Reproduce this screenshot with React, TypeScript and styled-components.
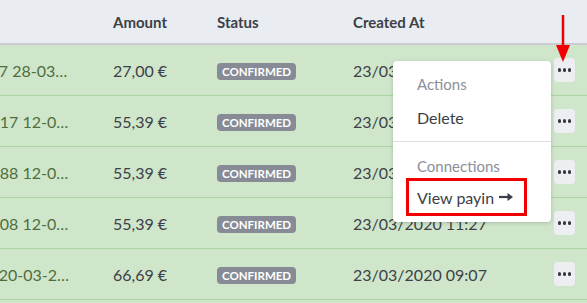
import { ReactElement } from 'react'
import styled, { createGlobalStyle } from 'styled-components'

const GlobalStyle = createGlobalStyle`
  html, body {
    margin: 0;
    padding: 0;
    background: #cfe6cb;
    font-family: Lato, "Open Sans", sans-serif;
    overflow: hidden;
  }
`

const Page = styled.div`
  position: relative;
  width: 587px;
  height: 303px;
  overflow: hidden;
`

// the table is scrolled sideways, so its first column is partly out of view
const Table = styled.div`
  margin-left: -82px;
  width: 669px;
`

const cols = '195px 104px 136px 201px 33px'

const HeaderRow = styled.div`
  display: grid;
  grid-template-columns: ${cols};
  align-items: center;
  height: 43px;
  background: #e9ecf0;
  border-bottom: 2px solid #c9ccd2;
  color: #3b3f47;
  font-weight: 700;
  font-size: 15px;
`

const Row = styled.div`
  display: grid;
  grid-template-columns: ${cols};
  align-items: center;
  height: 50px;
  background: #cfe6cb;
  border-bottom: 1px solid #a8d69f;
  color: #3d4147;
  font-size: 16px;
`

const Cell = styled.div`
  white-space: nowrap;
  overflow: hidden;
`

const LeadCell = styled(Cell)`
  padding-right: 41px;
  color: #4f6e3c;
  text-overflow: ellipsis;
`

const Badge = styled.span`
  display: inline-block;
  background: #868b95;
  color: #fff;
  font-size: 11.5px;
  font-weight: 700;
  line-height: 13px;
  padding: 2px 5px;
  border-radius: 4px;
`

const ActionCell = styled.div`
  display: flex;
`

const DotsButton = styled.div`
  width: 21px;
  height: 24px;
  border-radius: 4px;
  background: #eceef1;
  display: flex;
  align-items: center;
  justify-content: center;
  gap: 1.5px;
`

const Dot = styled.span`
  width: 3.5px;
  height: 3.5px;
  border-radius: 50%;
  background: #33373e;
`

const Menu = styled.div`
  position: absolute;
  left: 393px;
  top: 61px;
  width: 158px;
  background: #fff;
  border-radius: 4px;
  box-shadow: 0 1px 4px rgba(0, 0, 0, 0.18);
  padding: 12px 0 6px;
`

const MenuLabel = styled.div`
  padding-left: 24px;
  font-size: 15px;
  color: #8b9099;
  height: 22px;
  line-height: 22px;
`

const MenuItem = styled.div`
  padding-left: 24px;
  font-size: 16px;
  color: #3b3f47;
  height: 46px;
  line-height: 46px;
`

const Divider = styled.div`
  border-top: 1px solid #dcdee2;
  margin: 0 0 13px;
`

const Highlight = styled.div`
  margin: 1px 0 0 13px;
  width: 107px;
  height: 32px;
  border: 3px solid #f00000;
  display: flex;
  align-items: center;
  padding-left: 8px;
  font-size: 16px;
  color: #3b3f47;
  gap: 5px;
`

const Pointer = styled.svg`
  position: absolute;
  left: 556px;
  top: 15px;
`

const rows = [
  { id: 'Payout 2017 28-03-2020', amount: '27,00 €', created: '23/03/2020 11:27' },
  { id: 'Payout 1\u200a2817 12-03-2020', amount: '55,39 €', created: '23/03/2020 11:27' },
  { id: 'Payout 1\u200a2088 12-03-2020', amount: '55,39 €', created: '23/03/2020 11:27' },
  { id: 'Payout 1\u200a1308 12-03-2020', amount: '55,39 €', created: '23/03/2020 11:27' },
  { id: 'Payout #2020-03-23 09:07', amount: '66,69 €', created: '23/03/2020 09:07' }
]

const Dots = (): ReactElement => (
  <DotsButton>
    <Dot />
    <Dot />
    <Dot />
  </DotsButton>
)

export default function App(): ReactElement {
  return (
    <Page>
      <GlobalStyle />
      <Table>
        <HeaderRow>
          <Cell />
          <Cell>Amount</Cell>
          <Cell>Status</Cell>
          <Cell>Created At</Cell>
          <Cell />
        </HeaderRow>
        {rows.map((r) => (
          <Row key={r.id + r.created}>
            <LeadCell>{r.id}</LeadCell>
            <Cell>{r.amount}</Cell>
            <Cell>
              <Badge>CONFIRMED</Badge>
            </Cell>
            <Cell>{r.created}</Cell>
            <ActionCell>
              <Dots />
            </ActionCell>
          </Row>
        ))}
      </Table>
      <Menu>
        <MenuLabel>Actions</MenuLabel>
        <MenuItem>Delete</MenuItem>
        <Divider />
        <MenuLabel>Connections</MenuLabel>
        <Highlight>
          View payin
          <svg width="14" height="8" viewBox="0 0 14 8">
            <path d="M0 4h10" stroke="#3b3f47" strokeWidth="2.2" />
            <path d="M8.5 0l5.5 4-5.5 4z" fill="#3b3f47" />
          </svg>
        </Highlight>
      </Menu>
      <Pointer width="16" height="48" viewBox="0 0 16 48">
        <path d="M7 0v34" stroke="#f00000" strokeWidth="2.5" />
        <path d="M0 30h14l-7 17z" fill="#f00000" />
      </Pointer>
    </Page>
  )
}
